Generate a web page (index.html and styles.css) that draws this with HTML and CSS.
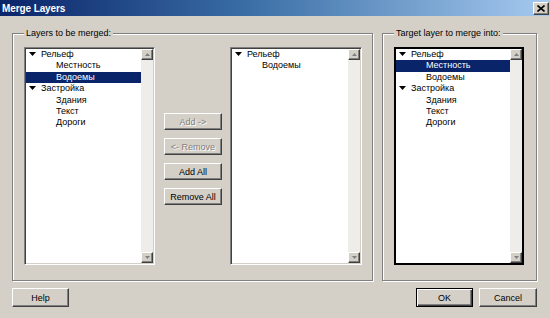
FILE: index.html
```html
<!DOCTYPE html>
<html lang="en">
  <head>
    <meta charset="UTF-8" />
    <title>Merge Layers</title>
    <link rel="stylesheet" href="styles.css">
  </head>
  <body>
    <div class="titlebar">
      <span class="title">Merge Layers</span>
      <button class="close-btn" title="Close">
        <svg width="8" height="7" viewBox="0 0 8 7">
          <path d="M0.5 0.5 L7.5 6.5 M7.5 0.5 L0.5 6.5" stroke="#000" stroke-width="1.6" fill="none" />
        </svg>
      </button>
    </div>

    <div class="groups">
      <div class="group group-merge">
        <div class="legend">Layers to be merged:</div>
        <div class="group-body">
          <div class="listbox list-source">
            <ul class="tree">
              <li class="node"><svg class="twisty" width="7" height="4" viewBox="0 0 7 4"><path d="M0 0 H7 L3.5 4 Z" fill="#000" /></svg>Рельеф</li>
              <li class="leaf">Местность</li>
              <li class="leaf selected">Водоемы</li>
              <li class="node"><svg class="twisty" width="7" height="4" viewBox="0 0 7 4"><path d="M0 0 H7 L3.5 4 Z" fill="#000" /></svg>Застройка</li>
              <li class="leaf">Здания</li>
              <li class="leaf">Текст</li>
              <li class="leaf">Дороги</li>
            </ul>
            <div class="scrollbar">
              <span class="sb-btn"><svg width="5" height="3" viewBox="0 0 5 3"><path d="M0 3 H5 L2.5 0 Z" fill="#808080" /></svg></span>
              <span class="sb-track"></span>
              <span class="sb-btn"><svg width="5" height="3" viewBox="0 0 5 3"><path d="M0 0 H5 L2.5 3 Z" fill="#808080" /></svg></span>
            </div>
          </div>

          <div class="actions">
            <button class="btn" disabled>Add -&gt;</button>
            <button class="btn" disabled>&lt;- Remove</button>
            <button class="btn">Add All</button>
            <button class="btn">Remove All</button>
          </div>

          <div class="listbox list-result">
            <ul class="tree">
              <li class="node"><svg class="twisty" width="7" height="4" viewBox="0 0 7 4"><path d="M0 0 H7 L3.5 4 Z" fill="#000" /></svg>Рельеф</li>
              <li class="leaf">Водоемы</li>
            </ul>
            <div class="scrollbar">
              <span class="sb-btn"><svg width="5" height="3" viewBox="0 0 5 3"><path d="M0 3 H5 L2.5 0 Z" fill="#808080" /></svg></span>
              <span class="sb-track"></span>
              <span class="sb-btn"><svg width="5" height="3" viewBox="0 0 5 3"><path d="M0 0 H5 L2.5 3 Z" fill="#808080" /></svg></span>
            </div>
          </div>
        </div>
      </div>

      <div class="group group-target">
        <div class="legend">Target layer to merge into:</div>
        <div class="group-body">
          <div class="listbox list-target">
            <ul class="tree">
              <li class="node"><svg class="twisty" width="7" height="4" viewBox="0 0 7 4"><path d="M0 0 H7 L3.5 4 Z" fill="#000" /></svg>Рельеф</li>
              <li class="leaf selected">Местность</li>
              <li class="leaf">Водоемы</li>
              <li class="node"><svg class="twisty" width="7" height="4" viewBox="0 0 7 4"><path d="M0 0 H7 L3.5 4 Z" fill="#000" /></svg>Застройка</li>
              <li class="leaf">Здания</li>
              <li class="leaf">Текст</li>
              <li class="leaf">Дороги</li>
            </ul>
            <div class="scrollbar">
              <span class="sb-btn"><svg width="5" height="3" viewBox="0 0 5 3"><path d="M0 3 H5 L2.5 0 Z" fill="#808080" /></svg></span>
              <span class="sb-track"></span>
              <span class="sb-btn"><svg width="5" height="3" viewBox="0 0 5 3"><path d="M0 0 H5 L2.5 3 Z" fill="#808080" /></svg></span>
            </div>
          </div>
        </div>
      </div>
    </div>

    <div class="footer">
      <button class="btn btn-help">Help</button>
      <span class="spacer"></span>
      <button class="btn btn-ok">OK</button>
      <button class="btn btn-cancel">Cancel</button>
    </div>
  </body>
</html>
```

FILE: styles.css
```css
body {
  margin: 0;
  width: 550px;
  height: 318px;
  overflow: hidden;
  background-color: #d4d0c8;
  font-family: "Liberation Sans", Arial, sans-serif;
  font-size: 9px;
  color: #000;
}

.titlebar {
  height: 16px;
  display: flex;
  align-items: center;
  justify-content: space-between;
  padding: 0 1px 0 2px;
  background: linear-gradient(to right, #0a246a 0%, #3a6ea5 45%, #a6caf0 100%);
}

.title {
  color: #fff;
  font-weight: bold;
  font-size: 10px;
  letter-spacing: -0.1px;
}

.close-btn {
  width: 16px;
  height: 13px;
  padding: 0;
  display: flex;
  align-items: center;
  justify-content: center;
  background-color: #d4d0c8;
  border: 1px solid;
  border-color: #fff #404040 #404040 #fff;
  box-shadow: inset -1px -1px 0 #808080;
}

.groups {
  display: flex;
  gap: 9px;
  margin-top: 17px;
  padding: 0 13px 0 12px;
}

.group {
  box-sizing: border-box;
  height: 248px;
  border: 1px solid #808080;
  box-shadow: 1px 1px 0 #fff, inset 1px 1px 0 #fff;
}

.group-merge {
  width: 361px;
}

.group-target {
  width: 155px;
}

.legend {
  width: fit-content;
  margin: -7px 0 0 11px;
  padding: 0 2px;
  line-height: 13px;
  background-color: #d4d0c8;
}

.group-body {
  display: flex;
  margin-top: 7px;
  padding-left: 11px;
}

.listbox {
  box-sizing: border-box;
  height: 218px;
  display: flex;
  background-color: #fff;
  border: 1px solid;
  border-color: #808080 #fff #fff #808080;
  box-shadow: inset 1px 1px 0 #404040, inset -1px -1px 0 #d4d0c8;
  padding: 1px;
}

.list-source {
  width: 131px;
}

.list-result {
  width: 132px;
}

.list-target {
  width: 130px;
  border: 2px solid #000;
  box-shadow: none;
  padding: 0;
}

.tree {
  flex: 1;
  list-style: none;
  margin: 0;
  padding: 0;
}

.tree li {
  height: 11.4px;
  line-height: 11.4px;
  white-space: nowrap;
}

.tree .node {
  padding-left: 3px;
}

.twisty {
  margin-right: 5px;
  vertical-align: 1px;
}

.tree .leaf {
  padding-left: 30px;
}

.tree .selected {
  background-color: #0a246a;
  color: #fff;
}

.scrollbar {
  width: 12px;
  display: flex;
  flex-direction: column;
}

.sb-btn {
  box-sizing: border-box;
  height: 11px;
  display: flex;
  align-items: center;
  justify-content: center;
  background-color: #d4d0c8;
  border: 1px solid;
  border-color: #fff #404040 #404040 #fff;
  box-shadow: inset -1px -1px 0 #808080;
}

.sb-track {
  flex: 1;
  background-color: #efede9;
}

.actions {
  width: 58px;
  display: flex;
  flex-direction: column;
  gap: 8px;
  margin: 0 8px 0 9px;
  padding-top: 66px;
}

.btn {
  box-sizing: border-box;
  height: 17px;
  padding: 0;
  font-family: inherit;
  font-size: 9px;
  color: #000;
  background-color: #d4d0c8;
  border: 1px solid;
  border-color: #fff #404040 #404040 #fff;
  box-shadow: inset -1px -1px 0 #808080;
}

.btn:disabled {
  color: #808080;
  text-shadow: 1px 1px 0 #fff;
}

.footer {
  display: flex;
  gap: 6px;
  margin-top: 7px;
  padding: 0 13px 0 12px;
}

.footer .btn {
  height: 19px;
  width: 57px;
}

.spacer {
  flex: 1;
}

.btn-ok {
  border: 1px solid #000;
  box-shadow: inset 1px 1px 0 #fff, inset -1px -1px 0 #404040, inset -2px -2px 0 #808080;
}

.btn-cancel {
  width: 58px !important;
}
```
